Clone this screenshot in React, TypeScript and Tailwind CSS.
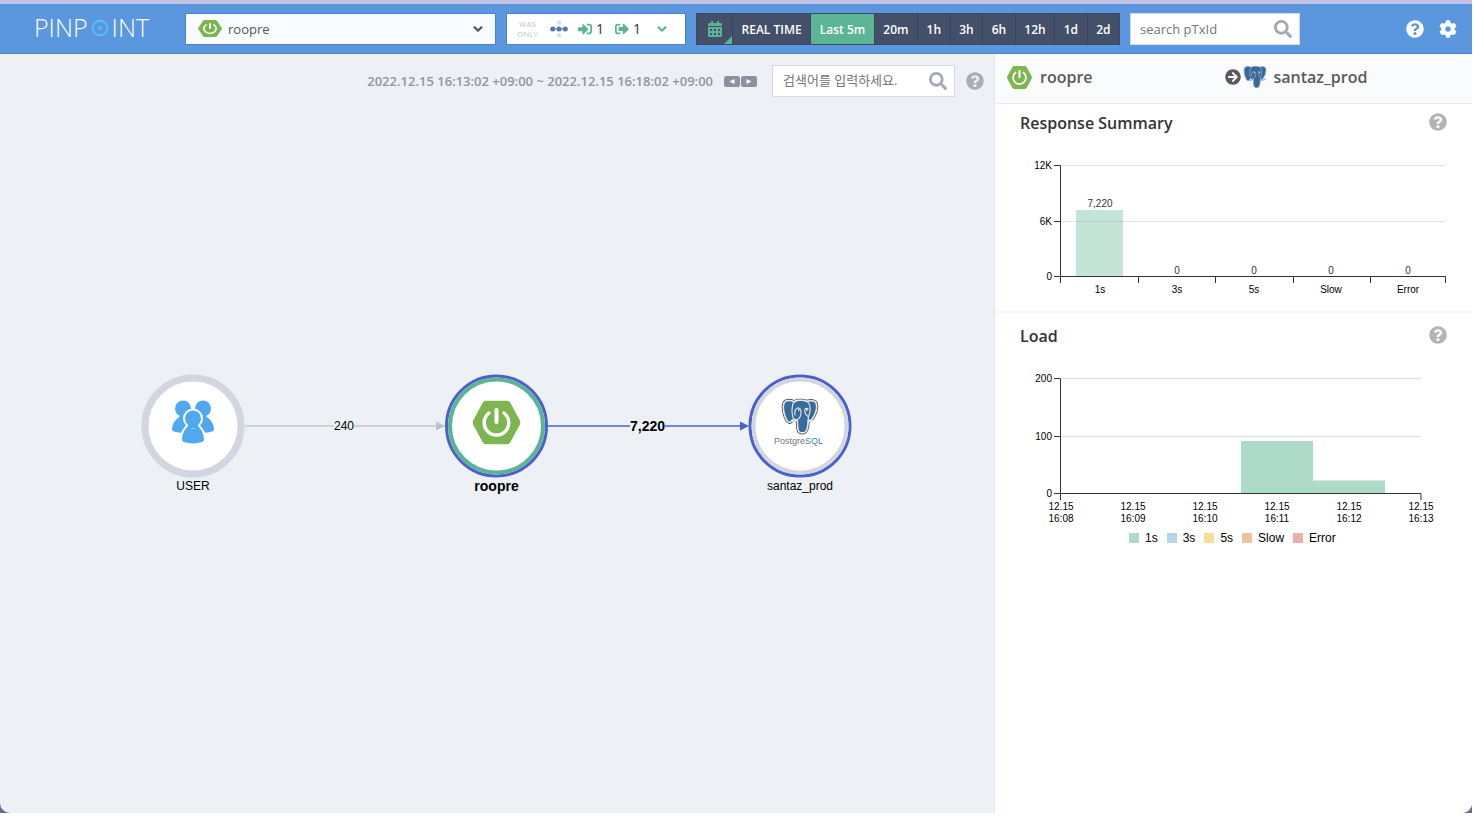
import clsx from "clsx";
import {
  FaArrowCircleRight,
  FaCalendarAlt,
  FaChevronDown,
  FaCog,
  FaQuestionCircle,
  FaSearch,
  FaSignInAlt,
  FaSignOutAlt,
} from "react-icons/fa";

const PERIODS = ["Last 5m", "20m", "1h", "3h", "6h", "12h", "1d", "2d"];

const LEGEND = [
  { name: "1s", color: "bg-[#aedbc9]" },
  { name: "3s", color: "bg-[#b3d5ee]" },
  { name: "5s", color: "bg-[#fbdd9b]" },
  { name: "Slow", color: "bg-[#eec19f]" },
  { name: "Error", color: "bg-[#ecadad]" },
];

const RESPONSE = [
  { name: "1s", value: 7220 },
  { name: "3s", value: 0 },
  { name: "5s", value: 0 },
  { name: "Slow", value: 0 },
  { name: "Error", value: 0 },
];

const LOAD_TIMES = ["16:08", "16:09", "16:10", "16:11", "16:12", "16:13"];

const SpringBootIcon = ({ className }: { className?: string }) => (
  <svg viewBox="0 0 48 44" preserveAspectRatio="none" className={className} aria-hidden="true">
    <path
      d="M14 0h20q2.500 0 3.800 2.200L47.300 19.800q1.200 2.200 0 4.400L37.800 41.800Q36.500 44 34 44H14q-2.500 0-3.800-2.200L.7 24.200q-1.200-2.200 0-4.400L10.200 2.200Q11.500 0 14 0z"
      fill="#7db550"
    />
    <path d="M16.500 12.500a12.300 12.300 0 1 0 15 0" fill="none" stroke="#fff" strokeWidth="3.400" strokeLinecap="round" />
    <path d="M24 9.500v12" stroke="#fff" strokeWidth="4" strokeLinecap="round" />
  </svg>
);

const LEFT_EAR = "M10 2.500Q2 .5 1.500 8q0 8 4 14.500 2 2.500 4.500-.5l3-3V4z";
const RIGHT_EAR = "M25 3q9-2.500 9.500 4.500 0 7-5 13.500-2 2-4.500-1z";
const TRUNK =
  "M11 5q2.500-3.500 7-3 6.500-.5 9 3 2 4 .5 10-1.500 4-1.500 7-.3 11-4 12-5.500 1-6-4l-.5-9q-3 1-4.500-2-2-6 0-14z";

const ElephantShape = ({ line }: { line: string }) => (
  <g fill="#3a6a99" stroke={line} strokeWidth="1.100" strokeLinejoin="round">
    <path d={LEFT_EAR} />
    <path d={RIGHT_EAR} />
    <path d={TRUNK} />
    <path d="M13 17q-1-6 2.500-7.500 3.500-.5 3.500 4 .3 5-3.500 7.500M23 10q3-.5 3.500 1M23 10q-1 5 3 8" fill="none" />
    <path d="M9 22q3.500 2 6.500-1M26 22q4 2 8-1.500" fill="none" strokeWidth="1.600" />
    <path d="M16 11.500h1.500M24 11.500h1.500" stroke="#fff" strokeWidth="1.300" />
  </g>
);

const PostgresIcon = ({ className }: { className?: string }) => (
  <svg viewBox="0 0 36 36" className={className} aria-hidden="true">
    <ElephantShape line="#8eabc6" />
  </svg>
);

const Logo = () => (
  <a
    href="#"
    aria-label="Pinpoint"
    className="flex w-[141px] items-center gap-[3px] pb-[2px] text-[25px] leading-none font-light text-white">
    <span>PINP</span>
    <svg viewBox="0 0 18 18" className="size-[18px]" aria-hidden="true">
      <circle cx="9" cy="9" r="7.300" fill="none" stroke="#54bdf5" strokeWidth="2.200" />
      <circle cx="9" cy="9" r="2" fill="#54bdf5" />
    </svg>
    <span>INT</span>
  </a>
);

const ServerMapOptions = () => (
  <div className="flex h-8 w-[180px] items-center border border-[#4c83c6] bg-white pl-[10px] text-[14px] text-[#333]">
    <button type="button" className="text-center text-[8px] leading-[10px] font-medium text-[#c4c6cb]">
      <span className="block">WAS</span>
      <span className="block">ONLY</span>
    </button>
    <button type="button" aria-label="Bidirectional" className="ml-[12px]">
      <svg viewBox="0 0 18 18" className="size-[18px]">
        <g fill="#dbe2f1">
          <circle cx="9" cy="2.700" r="2.500" />
          <circle cx="9" cy="15.300" r="2.500" />
        </g>
        <g fill="#5477b8">
          <path d="M3 8.500h12v1H3z" />
          <circle cx="2.700" cy="9" r="2.500" />
          <circle cx="9" cy="9" r="2.500" />
          <circle cx="15.300" cy="9" r="2.500" />
        </g>
      </svg>
    </button>
    <FaSignInAlt className="ml-[10px] size-[14px] text-[#5bb594]" />
    <span className="ml-1">1</span>
    <FaSignOutAlt className="ml-[11px] size-[14px] text-[#5bb594]" />
    <span className="ml-1">1</span>
    <button type="button" aria-label="More options" className="ml-[16px] text-[#5bb594]">
      <FaChevronDown className="size-[10px]" stroke="currentColor" strokeWidth="40" />
    </button>
  </div>
);

const PeriodSelector = () => (
  <div className="flex h-8 w-[424px] border border-[#3c4a66] bg-[#444f69] text-[12px] font-semibold text-white">
    <button
      type="button"
      aria-label="Calendar"
      className="relative flex w-[36px] items-center justify-center border-r border-[#3a4560] text-[#5bb594]">
      <FaCalendarAlt className="size-4" />
      <svg viewBox="0 0 8 8" className="absolute right-0 bottom-0 size-2">
        <path d="M8 0v8H0z" fill="#5bb594" />
      </svg>
    </button>
    <button type="button" className="flex-auto border-r border-[#3a4560] pt-[2px]">
      REAL TIME
    </button>
    {PERIODS.map((period, i) => (
      <button
        key={period}
        type="button"
        className={clsx("flex-auto pt-[2px]", i === 0 ? "bg-[#5bb594]" : "border-l border-[#3a4560]")}>
        {period}
      </button>
    ))}
  </div>
);

const Header = () => (
  <header className="flex h-[50px] items-center gap-[10px] border-b border-[#4c83c6] bg-[#5b97de] pl-[34px]">
    <Logo />
    <label className="relative flex h-8 w-[311px] items-center border border-[#4c83c6] bg-[#f8fbff]">
      <SpringBootIcon className="absolute left-3 h-[17px] w-6" />
      <select
        aria-label="Application"
        className="size-full appearance-none bg-transparent pt-[2px] pl-[42px] text-[13px] text-[#555] outline-none">
        <option>roopre</option>
      </select>
      <FaChevronDown
        className="pointer-events-none absolute right-3 size-[10px] text-[#555]"
        stroke="currentColor"
        strokeWidth="40"
      />
    </label>
    <ServerMapOptions />
    <PeriodSelector />
    <div className="flex h-8 w-[170px] items-center border border-[#d4d9e6] bg-white pr-[7px] pl-[9px]">
      <input
        aria-label="Transaction id"
        placeholder="search pTxId"
        className="min-w-0 flex-1 pt-[2px] text-[13px] outline-none placeholder:text-[#757575]"
      />
      <FaSearch className="size-[18px] text-[#a4a9b3]" />
    </div>
    <div className="ml-auto flex gap-[15px] pr-[15px] text-white">
      <button type="button" aria-label="Help">
        <FaQuestionCircle className="size-[18px]" />
      </button>
      <button type="button" aria-label="Configuration">
        <FaCog className="size-[18px]" />
      </button>
    </div>
  </header>
);

const ServerMap = () => (
  <svg
    width="712"
    height="120"
    viewBox="0 0 712 120"
    textAnchor="middle"
    className="font-['Liberation_Sans',sans-serif] text-[12px]">
    <path d="M104 52h200" stroke="#c3c6cc" strokeWidth="1.500" />
    <path d="M295 47.500l9 4.500-9 4.500z" fill="#bfc2c8" />
    <path d="M407 52h193" stroke="#4b5fcf" strokeWidth="1.500" />
    <path d="M599 47.500l9 4.500-9 4.500z" fill="#4b5fcf" />

    <circle cx="52" cy="52" r="48" fill="#fff" stroke="#d1d6df" strokeWidth="7" />
    <g fill="#50a8ef">
      <circle cx="42" cy="34.500" r="8" />
      <circle cx="62" cy="34.500" r="8" />
      <path d="M38 39.500q2 2 0 3.500-6.500 5-7 12 0 2 2 2.500 4 1.500 8 1l8-10-3-9z" />
      <path d="M66 39.500q-2 2 0 3.500 6.500 5 7 12 0 2-2 2.500-4 1.500-8 1l-8-10 3-9z" />
      <g stroke="#fff" strokeWidth="2">
        <path d="M47 51q-6.500 5-7 14 0 3 2.500 4 9.500 3 19 0 2.500-1 2.500-4-.5-9-7-14z" />
        <circle cx="52" cy="44.500" r="9" />
      </g>
      <path d="M48 49h8l2 5H46z" />
    </g>
    <text x="52" y="116">
      USER
    </text>

    <circle cx="355.500" cy="52" r="50" fill="#fff" stroke="#4b5fcf" strokeWidth="3" />
    <circle cx="355.500" cy="52" r="46.500" fill="none" stroke="#5bb594" strokeWidth="4" />
    <svg x="331.500" y="26.500" width="48" height="44">
      <SpringBootIcon />
    </svg>
    <text x="355.500" y="117" className="text-[14px] font-bold">
      roopre
    </text>

    <circle cx="659" cy="52" r="50" fill="#fff" stroke="#4b5fcf" strokeWidth="3" />
    <circle cx="659" cy="52" r="46.500" fill="none" stroke="#d1d6df" strokeWidth="4" />
    <g transform="translate(641 24.500)">
      <g fill="#fff" strokeLinejoin="round">
        <path d={LEFT_EAR + RIGHT_EAR + TRUNK} stroke="#555" strokeWidth="3.600" />
        <path d={LEFT_EAR + RIGHT_EAR + TRUNK} stroke="#fff" strokeWidth="1.800" />
      </g>
      <ElephantShape line="#e4ebf2" />
    </g>
    <text x="633" y="70" textAnchor="start" fill="#777" className="text-[9px]">
      Postgre<tspan fill="#4583bb">SQL</tspan>
    </text>
    <text x="659" y="116">
      santaz_prod
    </text>

    <path d="M193 46h20v12h-20zM489 44h35v16h-35z" fill="#edf1f6" />
    <text x="203" y="56">
      240
    </text>
    <text x="506.500" y="57" className="text-[14px] font-bold">
      7,220
    </text>
  </svg>
);

const ServerMapToolbar = () => (
  <div className="absolute top-[11px] right-[10px] flex items-center">
    <span className="pt-px text-[13px] font-semibold text-[#8f96a2]">
      2022.12.15 16:13:02 +09:00 ~ 2022.12.15 16:18:02 +09:00
    </span>
    <div className="ml-[11px] flex gap-px">
      {["Previous", "Next"].map((name, i) => (
        <button key={name} type="button" aria-label={name}>
          <svg viewBox="0 0 16 11" className="h-[11px] w-4">
            <rect width="16" height="11" rx="2.500" fill="#8b929e" />
            <path d={i === 0 ? "M10.500 3v5L5.500 5.500z" : "M5.500 3v5l5-2.500z"} fill="#fff" />
          </svg>
        </button>
      ))}
    </div>
    <div className="ml-[15px] flex h-8 w-[183px] items-center border border-[#d4d9e6] bg-white pr-[7px] pl-[10px]">
      <input
        aria-label="검색어"
        placeholder="검색어를 입력하세요."
        className="min-w-0 flex-1 text-[13px] outline-none placeholder:text-[#757575]"
      />
      <FaSearch className="size-[18px] text-[#a4a9b3]" />
    </div>
    <button type="button" aria-label="Server map help" className="ml-[11px] text-[#a9adb8]">
      <FaQuestionCircle className="size-[18px]" />
    </button>
  </div>
);

const SectionTitle = ({ title }: { title: string }) => (
  <div className="flex items-center justify-between pr-[25px] pl-[25px]">
    <h2 className="text-[16px] leading-6 font-semibold text-[#333]">{title}</h2>
    <button type="button" aria-label={`${title} help`} className="pb-[2px] text-[#b3b3b8]">
      <FaQuestionCircle className="size-[18px]" />
    </button>
  </div>
);

const ResponseChart = () => (
  <svg
    width="440"
    height="140"
    viewBox="0 0 440 140"
    textAnchor="middle"
    className="ml-[25px] font-['Liberation_Sans',sans-serif] text-[10px]">
    <path d="M41 10.500h384M41 66.500h384" stroke="#e1e1e1" />
    <rect x="56" y="55" width="47" height="67" fill="#5bb594" fillOpacity="0.360" />
    <path
      d="M34 10.500h6.500V128M34 66.500h6.500M34 121.500h391.500v6.500M118.500 122v6M195.500 122v6M273.500 122v6M350.500 122v6"
      fill="none"
      stroke="#333"
    />
    <g textAnchor="end">
      <text x="32" y="14">
        12K
      </text>
      <text x="32" y="70">
        6K
      </text>
      <text x="32" y="125">
        0
      </text>
    </g>
    {RESPONSE.map(({ name, value }, i) => (
      <g key={name}>
        <text x={80 + i * 77} y={value ? 52 : 119} fill="#333">
          {value.toLocaleString("en-US")}
        </text>
        <text x={80 + i * 77} y="138">
          {name}
        </text>
      </g>
    ))}
  </svg>
);

const LoadChart = () => (
  <svg
    width="440"
    height="156"
    viewBox="0 0 440 156"
    textAnchor="middle"
    className="ml-[25px] font-['Liberation_Sans',sans-serif] text-[10px]">
    <path d="M41 10.500h360M41 68.500h360" stroke="#e1e1e1" strokeWidth="1.500" />
    <path d="M221 125V73h72v39.500h72V125z" fill="#aedbc9" />
    <path d="M34 10.500h6.500V132M34 68.500h6.500M34 125.500h367v6.500" fill="none" stroke="#333" />
    <g textAnchor="end">
      <text x="32" y="14">
        200
      </text>
      <text x="32" y="72">
        100
      </text>
      <text x="32" y="129">
        0
      </text>
    </g>
    {LOAD_TIMES.map((time, i) => (
      <text key={time} y="142">
        <tspan x={41 + i * 72}>12.15</tspan>
        <tspan x={41 + i * 72} dy="12">
          {time}
        </tspan>
      </text>
    ))}
  </svg>
);

const Sidebar = () => (
  <aside className="w-[478px] border-l border-[#e3e6ef] bg-white">
    <div className="grid h-[50px] grid-cols-2 items-center border-b border-[#e6e8ef] bg-[#fafbfd] pr-[30px] pb-[3px] pl-[12px] text-[16px] font-semibold text-[#5a5a5a]">
      <div className="flex items-center gap-2">
        <SpringBootIcon className="h-[23px] w-[25px]" />
        roopre
      </div>
      <div className="flex items-center">
        <FaArrowCircleRight className="size-4" />
        <PostgresIcon className="mr-[7px] ml-[2px] size-6" />
        santaz_prod
      </div>
    </div>
    <section className="border-b-2 border-[#f3f4f9] pt-[7px] pb-[16px]">
      <SectionTitle title="Response Summary" />
      <div className="mt-5">
        <ResponseChart />
      </div>
    </section>
    <section className="pt-[11px]">
      <SectionTitle title="Load" />
      <div className="mt-5">
        <LoadChart />
      </div>
      <ul className="mt-[6px] ml-[134px] flex gap-[9px] font-['Liberation_Sans',sans-serif] text-[12px] leading-4">
        {LEGEND.map(({ name, color }) => (
          <li key={name} className="flex items-center gap-[6px]">
            <span className={clsx("size-[10px]", color)} />
            {name}
          </li>
        ))}
      </ul>
    </section>
  </aside>
);

export default function App() {
  return (
    <div className="flex min-h-screen flex-col bg-white pr-[2px] pb-[3px] font-['Open_Sans','Noto_Sans_CJK_KR',sans-serif] text-black">
      <div className="flex flex-1 flex-col bg-[#6f6690]">
        <div className="flex flex-1 flex-col overflow-hidden rounded-b-[10px] border-t-4 border-[#c5c3e4] bg-[#edf1f6]">
          <Header />
          <div className="flex flex-1">
            <main className="relative flex flex-1 items-center justify-center">
              <ServerMapToolbar />
              <ServerMap />
            </main>
            <Sidebar />
          </div>
        </div>
      </div>
    </div>
  );
}
